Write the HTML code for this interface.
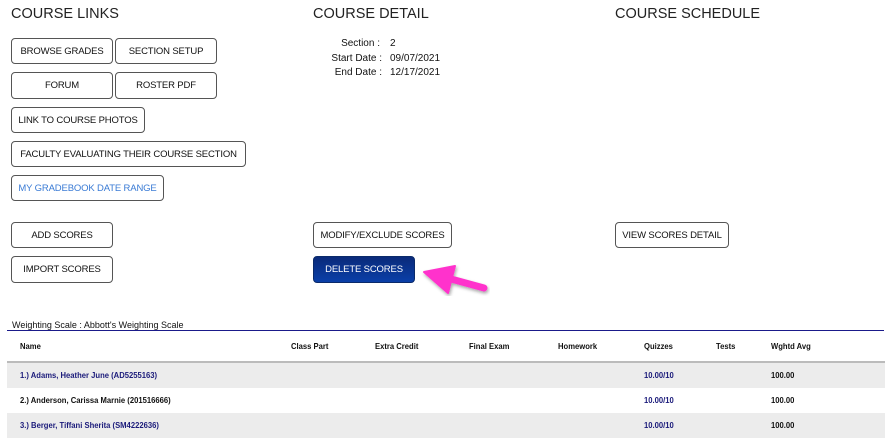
<!DOCTYPE html>
<html><head><style>
body{margin:0;width:896px;height:438px;background:#fff;font-family:"Liberation Sans",sans-serif;position:relative;overflow:hidden;color:#111}
.h{position:absolute;top:6px;font-size:14.5px;color:#222}
.b{position:absolute;box-sizing:border-box;border:1px solid #555;border-radius:4px;background:#fff;font-size:9.5px;letter-spacing:-0.15px;display:flex;align-items:center;justify-content:center;white-space:nowrap;color:#111}
.d{position:absolute;font-size:10px}
.t{position:absolute;font-size:8.5px;font-weight:bold;transform:scaleX(.9);transform-origin:left;white-space:nowrap}
.row{position:absolute;left:7px;width:878px;height:25px}
</style></head><body>
<div class="h" style="left:11px">COURSE LINKS</div>
<div class="h" style="left:313px">COURSE DETAIL</div>
<div class="h" style="left:615px">COURSE SCHEDULE</div>

<div class="b" style="left:11px;top:38px;width:102px;height:26px">BROWSE GRADES</div>
<div class="b" style="left:115px;top:38px;width:102px;height:26px">SECTION SETUP</div>
<div class="b" style="left:11px;top:72px;width:102px;height:27px">FORUM</div>
<div class="b" style="left:115px;top:72px;width:102px;height:27px">ROSTER PDF</div>
<div class="b" style="left:11px;top:107px;width:134px;height:26px">LINK TO COURSE PHOTOS</div>
<div class="b" style="left:11px;top:141px;width:235px;height:26px">FACULTY EVALUATING THEIR COURSE SECTION</div>
<div class="b" style="left:11px;top:175px;width:153px;height:26px;color:#3a7bd5">MY GRADEBOOK DATE RANGE</div>

<div class="d" style="left:300px;top:38px;width:80px;text-align:right">Section :</div><div class="d" style="left:390px;top:38px">2</div>
<div class="d" style="left:300px;top:53px;width:82px;text-align:right">Start Date :</div><div class="d" style="left:390px;top:53px">09/07/2021</div>
<div class="d" style="left:300px;top:67px;width:82px;text-align:right">End Date :</div><div class="d" style="left:390px;top:67px">12/17/2021</div>

<div class="b" style="left:11px;top:222px;width:102px;height:26px">ADD SCORES</div>
<div class="b" style="left:11px;top:256px;width:102px;height:27px">IMPORT SCORES</div>
<div class="b" style="left:313px;top:222px;width:139px;height:26px">MODIFY/EXCLUDE SCORES</div>
<div class="b" style="left:313px;top:256px;width:102px;height:27px;background:linear-gradient(#0a2a7a,#0a3fa8);border-color:#0a2a6a;color:#fff">DELETE SCORES</div>
<div class="b" style="left:615px;top:222px;width:114px;height:26px">VIEW SCORES DETAIL</div>

<svg style="position:absolute;left:0;top:0" width="896" height="438">
<defs><filter id="s"><feDropShadow dx="1" dy="2" stdDeviation="1.5" flood-opacity=".35"/></filter></defs>
<g filter="url(#s)" fill="#ff33cc" stroke="#ff33cc" stroke-linecap="round" stroke-linejoin="round">
<line x1="440" y1="276" x2="484" y2="288" stroke-width="7"/>
<polygon points="424,272 455,266 448,293" stroke-width="2"/>
</g></svg>

<div class="d" style="left:12px;top:320px;font-size:9px">Weighting Scale : Abbott's Weighting Scale</div>
<div style="position:absolute;left:7px;top:330px;width:877px;height:1px;background:#1a1a8a"></div>
<div style="position:absolute;left:7px;top:361px;width:878px;height:2px;background:#bbb"></div>
<div class="row" style="top:363px;background:#ececec"></div>
<div class="row" style="top:413px;background:#ececec"></div>
<div class="t" style="left:20px;top:341px">Name</div>
<div class="t" style="left:291px;top:341px">Class Part</div>
<div class="t" style="left:375px;top:341px">Extra Credit</div>
<div class="t" style="left:469px;top:341px">Final Exam</div>
<div class="t" style="left:558px;top:341px">Homework</div>
<div class="t" style="left:644px;top:341px">Quizzes</div>
<div class="t" style="left:716px;top:341px">Tests</div>
<div class="t" style="left:771px;top:341px">Wghtd Avg</div>

<div class="t" style="left:20px;top:370px;color:#1a1a7a">1.) Adams, Heather June (AD5255163)</div>
<div class="t" style="left:644px;top:370px;color:#1a1a7a">10.00/10</div>
<div class="t" style="left:771px;top:370px">100.00</div>
<div class="t" style="left:20px;top:395px">2.) Anderson, Carissa Marnie (201516666)</div>
<div class="t" style="left:644px;top:395px;color:#1a1a7a">10.00/10</div>
<div class="t" style="left:771px;top:395px">100.00</div>
<div class="t" style="left:20px;top:420px;color:#1a1a7a">3.) Berger, Tiffani Sherita (SM4222636)</div>
<div class="t" style="left:644px;top:420px;color:#1a1a7a">10.00/10</div>
<div class="t" style="left:771px;top:420px">100.00</div>
</body></html>
